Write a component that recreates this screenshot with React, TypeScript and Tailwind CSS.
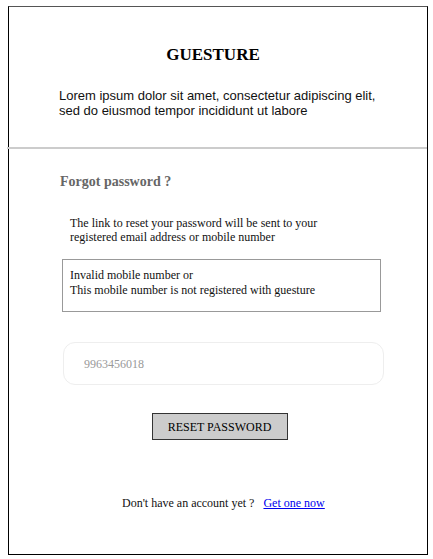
import React from "react";

export default function App() {
  return (
    <div className="w-[433px] h-[559px] bg-white pt-[6px] pl-[8px]">
      <div className="w-[420px] h-[549px] border border-black border-t-[#555] flex flex-col">
        <div className="h-[140px] flex flex-col">
          <h1 className="mt-[37px] pr-[10px] text-center text-[17px] font-bold text-black font-['Liberation_Serif',serif] leading-[22px]">
            GUESTURE
          </h1>
          <p className="mt-[22px] ml-[50px] text-[13px] leading-[15px] text-[#111] font-['Liberation_Sans',sans-serif]">
            Lorem ipsum dolor sit amet, consectetur adipiscing elit,
            <br />
            sed do eiusmod tempor incididunt ut labore
          </p>
        </div>
        <div className="h-[2px] bg-[#ccc] -ml-[2px]" />
        <div className="flex flex-col font-['Liberation_Serif',serif] text-[12px] text-[#111]">
          <h2 className="mt-[24px] ml-[51px] text-[14px] font-bold text-[#666] leading-[18px]">Forgot password ?</h2>
          <p className="mt-[25px] ml-[61px] leading-[14px]">
            The link to reset your password will be sent to your
            <br />
            registered email address or mobile number
          </p>
          <div className="mt-[15px] ml-[53px] w-[319px] h-[53px] border border-[#999] px-[7px] pt-[8px] leading-[15px]">
            Invalid mobile number or
            <br />
            This mobile number is not registered with guesture
          </div>
          <div className="mt-[30px] ml-[54px] w-[321px] h-[43px] border border-[#eee] rounded-[12px] flex items-center pl-[20px]">
            <input
              className="outline-none text-[12px] text-[#999] placeholder:text-[#999] w-full font-['Liberation_Serif',serif]"
              placeholder="9963456018"
            />
          </div>
          <div className="mt-[28px] flex justify-center">
            <button className="ml-[3px] w-[136px] h-[27px] bg-[#ccc] border border-[#333] text-[12px] text-black font-['Liberation_Serif',serif]">
              RESET PASSWORD
            </button>
          </div>
          <div className="mt-[55px] ml-[113px] flex gap-[9px] leading-[16px]">
            <span>Don't have an account yet ?</span>
            <a href="#" className="text-[#00e] underline">Get one now</a>
          </div>
        </div>
      </div>
    </div>
  );
}
